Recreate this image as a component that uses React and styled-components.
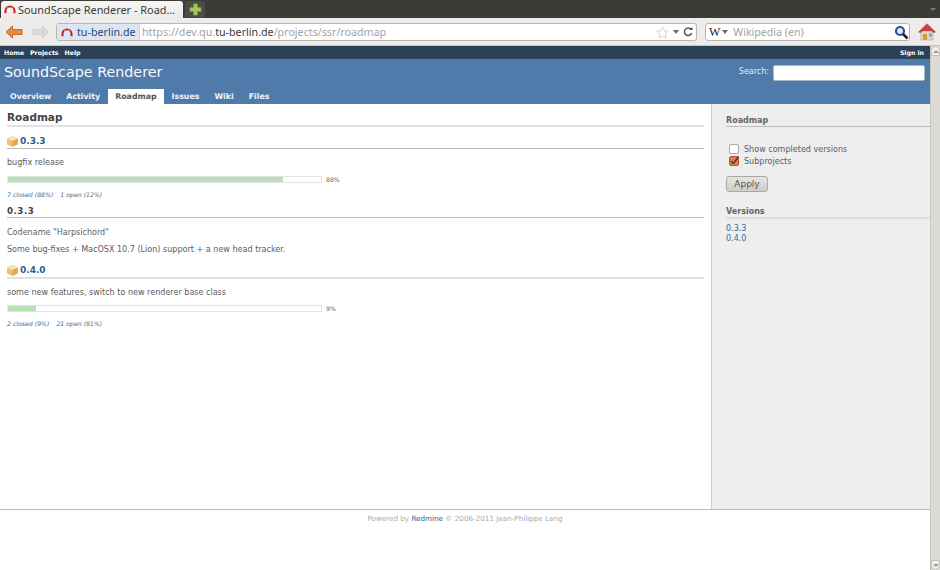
import React from 'react';
import styled, { createGlobalStyle } from 'styled-components';

const GlobalStyle = createGlobalStyle`
  html, body {
    margin: 0;
    padding: 0;
    overflow: hidden;
    background: #fff;
  }
`

const Browser = styled.div`
  width: 940px;
  height: 570px;
  display: flex;
  flex-direction: column;
  overflow: hidden;
  font-family: "DejaVu Sans", sans-serif;
`

const TabStrip = styled.div`
  height: 18px;
  flex: none;
  background: #3c3b37;
  display: flex;
  align-items: flex-end;
  padding-left: 1px;
  gap: 2px;
  position: relative;
`

const ActiveTab = styled.div`
  width: 182px;
  height: 17px;
  box-sizing: border-box;
  background: linear-gradient(#f6f5f4, #edecea);
  border-radius: 3px 3px 0 0;
  display: flex;
  align-items: center;
  padding-left: 3px;
  gap: 2px;
  font: 10.9px "Noto Sans", sans-serif;
  color: #3c3b37;
  white-space: nowrap;
`

const NewTab = styled.div`
  width: 20px;
  height: 17px;
  background: #4c4b46;
  border-radius: 3px 3px 0 0;
  display: flex;
  align-items: center;
  justify-content: center;
`

const TabMenu = styled.div`
  position: absolute;
  right: 4px;
  top: 8px;
  border-left: 3px solid transparent;
  border-right: 3px solid transparent;
  border-top: 3px solid #77766f;
`

const Toolbar = styled.div`
  height: 28px;
  flex: none;
  box-sizing: border-box;
  background: #edecea;
  border-bottom: 1px solid #c9c7c2;
  display: flex;
  align-items: center;
  padding: 1px 4px 0 5px;
`

const NavSlot = styled.div`
  display: flex;
  width: ${p => p.$width}px;
  flex: none;
`

const UrlBar = styled.div`
  width: 641px;
  height: 18px;
  box-sizing: border-box;
  border: 1px solid #b9b7b2;
  border-radius: 3px;
  background: #fff;
  display: flex;
  align-items: center;
  font: 10.7px "Noto Sans", sans-serif;
  color: #a3a3a3;
  overflow: hidden;
  flex: none;
  margin-right: 8px;
`

const SiteBadge = styled.div`
  height: 100%;
  width: 83px;
  flex: none;
  box-sizing: border-box;
  background: #dce6f2;
  border-right: 1px solid #ccd5e0;
  display: flex;
  align-items: center;
  padding-left: 4px;
  gap: 4px;
  color: #27476e;
  white-space: nowrap;
`

const UrlText = styled.div`
  flex: 1;
  padding-left: 2px;
  white-space: nowrap;

  b {
    font-weight: normal;
    color: #3c3b37;
  }
`

const UrlIcons = styled.div`
  display: flex;
  align-items: center;
  gap: 4px;
  padding-right: 3px;
`

const DropArrow = styled.span`
  display: inline-block;
  border-left: 3px solid transparent;
  border-right: 3px solid transparent;
  border-top: 4px solid #6a6a66;
`

const SearchBar = styled.div`
  width: 205px;
  height: 18px;
  box-sizing: border-box;
  border: 1px solid #b9b7b2;
  border-radius: 3px;
  background: #fff;
  display: flex;
  align-items: center;
  padding: 0 0 0 3px;
  font: 10.6px "Noto Sans", sans-serif;
  color: #a3a3a3;
  flex: none;
  margin-right: 8px;
`

const WikiW = styled.span`
  font: 12px "Liberation Serif", serif;
  color: #222;
  margin-right: 2px;
`

const SearchHint = styled.span`
  flex: 1;
  margin-left: 5px;
`

const Viewport = styled.div`
  flex: 1;
  display: flex;
  min-height: 0;
`

const Page = styled.div`
  flex: 1;
  display: flex;
  flex-direction: column;
  min-width: 0;
  font-size: 8.05px;
  color: #5c5c5c;
`

const TopMenu = styled.div`
  height: 13px;
  flex: none;
  background: #2c4056;
  display: flex;
  align-items: center;
  justify-content: space-between;
  padding: 0 6px 0 4px;
  color: #fff;
  font-size: 6.2px;
  font-weight: bold;
`

const TopLinks = styled.div`
  display: flex;
  gap: 6px;
`

const Header = styled.div`
  height: 45px;
  flex: none;
  background: #507aaa;
  color: #f8f8f8;
  display: flex;
  flex-direction: column;
  justify-content: space-between;
`

const HeaderTop = styled.div`
  display: flex;
  justify-content: space-between;
  padding: 5px 5px 0 4px;
`

const Title = styled.div`
  font-size: 14.3px;
  line-height: 17px;
`

const QuickSearch = styled.div`
  display: flex;
  align-items: center;
  gap: 4px;
  font-size: 8px;
  color: #e6ecf3;
`

const SearchLabel = styled.span`
  margin-bottom: 2px;
`

const SearchInput = styled.div`
  width: 150px;
  height: 14px;
  background: #fff;
  border: 1px solid #a9b6c4;
  border-radius: 2px;
`

const Tabs = styled.div`
  display: flex;
  height: 15px;
  padding-left: 3px;
  gap: 1px;
`

const Tab = styled.div`
  padding: 0 7px;
  line-height: 16px;
  font-size: 7.85px;
  font-weight: bold;
  color: ${p => (p.$active ? '#555' : '#f0f4f8')};
  background: ${p => (p.$active ? '#fff' : 'transparent')};
`

const Main = styled.div`
  flex: 1;
  display: flex;
  min-height: 0;
`

const Content = styled.div`
  flex: 1;
  padding: 6px 7px 0;
  min-width: 0;
`

const PageTitle = styled.h2`
  margin: 0;
  font-size: 10.5px;
  line-height: 15px;
  font-weight: bold;
  color: #444;
  border-bottom: 2px solid #e2e2e2;
`

const VersionHead = styled.h3`
  margin: ${p => p.$top || 7}px 0 0;
  font-size: 9px;
  height: 14px;
  font-weight: bold;
  color: #2f6090;
  display: flex;
  align-items: center;
  gap: 2px;
  border-bottom: ${p => (p.$thick ? '2px solid #e0e0e0' : '1px solid #bbb')};
`

const SubHead = styled.h3`
  margin: 7px 0 0;
  font-size: 8.7px;
  line-height: 11px;
  font-weight: bold;
  color: #444;
  letter-spacing: 0.5px;
  border-bottom: 1px solid #bbb;
`

const Text = styled.p`
  margin: ${p => p.$top}px 0 0;
  line-height: 11px;
`

const ProgressRow = styled.div`
  display: flex;
  align-items: center;
  margin-top: ${p => p.$top}px;
  height: 7px;
  gap: 4px;
  font-size: 6.2px;
`

const Track = styled.div`
  width: 315px;
  height: 7px;
  box-sizing: border-box;
  background: #fff;
  border: 1px solid #e4e4e4;
`

const Fill = styled.div`
  height: 100%;
  background: #bae0ba;
`

const Stats = styled.div`
  margin-top: 7px;
  display: flex;
  gap: 7px;
  font-size: 6.2px;
  line-height: 9px;
  font-style: italic;
  color: #666;

  a {
    color: #3a6a9a;
  }
`

const Sidebar = styled.div`
  width: 219px;
  flex: none;
  box-sizing: border-box;
  background: #eee;
  border-left: 1px solid #d0d0d0;
  padding: 11px 0 0 14px;
`

const SideHead = styled.div`
  font-size: 8px;
  line-height: 11px;
  font-weight: bold;
  color: #666;
  border-bottom: ${p => (p.$thick ? '2px solid #ddd' : '1px solid #bbb')};
  margin-top: ${p => p.$top || 0}px;
`

const CheckRow = styled.div`
  display: flex;
  align-items: center;
  gap: 5px;
  height: 12px;
  padding-left: 3px;
  margin-top: ${p => p.$top || 0}px;
`

const Box = styled.span`
  width: 8px;
  height: 8px;
  flex: none;
  border: 1px solid ${p => (p.$checked ? '#b5532f' : '#a9a9a4')};
  border-radius: 2px;
  background: ${p => (p.$checked ? '#e4794f' : '#fff')};
  display: flex;
  align-items: center;
  justify-content: center;
`

const ApplyButton = styled.button`
  display: block;
  margin: 9px 0 0;
  padding: 0;
  width: 42px;
  height: 16px;
  border: 1px solid #a9a8a3;
  border-radius: 3px;
  background: linear-gradient(#e6e5e3, #cfcdc9);
  font: 9px "DejaVu Sans", sans-serif;
  color: #555;
`

const VersionLink = styled.div`
  color: #3a6a9a;
  line-height: 10px;
  margin-top: ${p => p.$top || 0}px;
`

const Footer = styled.div`
  height: 61px;
  flex: none;
  box-sizing: border-box;
  border-top: 1px solid #bbb;
  background: #fff;
  padding-top: 4px;
  text-align: center;
  font-size: 7.2px;
  line-height: 10px;
  color: #aaa;

  a {
    color: #2f6090;
  }
`

const Scrollbar = styled.div`
  width: 10px;
  flex: none;
  box-sizing: border-box;
  background: #dcdad5;
  border-left: 1px solid #c8c6c1;
  display: flex;
  flex-direction: column;
  justify-content: space-between;
  align-items: center;
`

const ScrollEnd = styled.div`
  width: 9px;
  height: 10px;
  box-sizing: border-box;
  background: #f2f1f0;
  border: 1px solid #c2c0bb;
  border-radius: ${p => (p.$up ? '5px 5px 0 0' : '0 0 5px 5px')};
  display: flex;
  align-items: center;
  justify-content: center;

  &::after {
    content: '';
    border-left: 3px solid transparent;
    border-right: 3px solid transparent;
    ${p => (p.$up ? 'border-bottom' : 'border-top')}: 3px solid #9a9994;
  }
`

const ArcLogo = ({ size = 12 }) => (
  <svg width={size} height={size * 0.75} viewBox="0 0 16 12" fill="none" style={{ flex: 'none' }}>
    <path d="M2 11 L2 8 A6 6 0 0 1 14 8 L14 11" stroke="#c8242b" strokeWidth="2.8" />
    <path d="M4.5 2.5 L6.5 5 M11.5 2.5 L9.5 5" stroke="#fff" strokeWidth="0.9" opacity="0.8" />
  </svg>
)

const BackArrow = () => (
  <svg width="18" height="14" viewBox="0 0 18 14">
    <path d="M7.5 1 L1 7 L7.5 13 L7.5 9.5 L17 9.5 L17 4.5 L7.5 4.5 Z" fill="#e88a3c" stroke="#c8662a" strokeWidth="1" />
  </svg>
)

const ForwardArrow = () => (
  <svg width="18" height="14" viewBox="0 0 18 14">
    <path d="M10.5 1 L17 7 L10.5 13 L10.5 9.5 L1 9.5 L1 4.5 L10.5 4.5 Z" fill="#dcdbd8" stroke="#cfcec9" strokeWidth="1" />
  </svg>
)

const Plus = () => (
  <svg width="13" height="13" viewBox="0 0 13 13">
    <path d="M4.5 1 H8.5 V4.5 H12 V8.5 H8.5 V12 H4.5 V8.5 H1 V4.5 H4.5 Z" fill="#a3c75a" stroke="#7d9c3e" strokeWidth="0.8" />
  </svg>
)

const Star = () => (
  <svg width="13" height="13" viewBox="0 0 13 13">
    <path d="M6.5 1 L8.2 4.7 L12.2 5.2 L9.2 7.9 L10 12 L6.5 10 L3 12 L3.8 7.9 L0.8 5.2 L4.8 4.7 Z" fill="#fff" stroke="#d0d0cc" strokeWidth="1" />
  </svg>
)

const Reload = () => (
  <svg width="10" height="10" viewBox="0 0 10 10" fill="none">
    <path d="M8 2.5 A3.7 3.7 0 1 0 8.6 6" stroke="#55554f" strokeWidth="1.5" />
    <path d="M6 3 H9.5 V0 Z" fill="#55554f" />
  </svg>
)

const Magnifier = () => (
  <svg width="15" height="15" viewBox="0 0 15 15" fill="none">
    <circle cx="6" cy="6" r="4" fill="#dfe8f5" stroke="#2c4f9c" strokeWidth="2.2" />
    <path d="M9 9 L13.5 13.5" stroke="#222" strokeWidth="2.6" />
  </svg>
)

const Home = () => (
  <svg width="18" height="18" viewBox="0 0 18 18">
    <path d="M3 8 H15 V17 H3 Z" fill="#d9d7d0" stroke="#a5a39c" strokeWidth="0.6" />
    <path d="M5 11 H9 V17 H5 Z" fill="#d89a2c" />
    <path d="M11 10.5 H14 V13.5 H11 Z" fill="#8f9aa5" />
    <path d="M3 8 L9 2.6 L15 8 Z" fill="#c9463c" />
    <path d="M0.5 9 L9 0.8 L17.5 9 L15.5 9.6 L9 3.6 L2.5 9.6 Z" fill="#c9463c" stroke="#a5312a" strokeWidth="0.5" />
  </svg>
)

const PackageIcon = () => (
  <svg width="11" height="11" viewBox="0 0 11 11" style={{ flex: 'none' }}>
    <path d="M5.5 0.5 L10.5 2.8 V8.2 L5.5 10.5 L0.5 8.2 V2.8 Z" fill="#eec26a" stroke="#d7a24a" strokeWidth="0.5" />
    <path d="M0.5 2.8 L5.5 5 L10.5 2.8 L5.5 0.5 Z" fill="#f8e6b8" />
    <path d="M5.5 5 V10.5 L10.5 8.2 V2.8 Z" fill="#dda94e" />
  </svg>
)

const Check = () => (
  <svg width="10" height="10" viewBox="0 0 10 10" fill="none" style={{ flex: 'none', overflow: 'visible' }}>
    <path d="M2 5 L4.5 7.5 L9.5 0.5" stroke="#4a3a30" strokeWidth="1.3" />
  </svg>
)

const Progress = ({ percent, fill, top }) => (
  <ProgressRow $top={top}>
    <Track><Fill style={{ width: fill }} /></Track>
    {percent}
  </ProgressRow>
)

const tabs = ['Overview', 'Activity', 'Roadmap', 'Issues', 'Wiki', 'Files'];

const App = () => {
  return (
    <Browser>
      <GlobalStyle />
      <TabStrip>
        <ActiveTab><ArcLogo />SoundScape Renderer - Road…</ActiveTab>
        <NewTab><Plus /></NewTab>
        <TabMenu />
      </TabStrip>
      <Toolbar>
        <NavSlot $width={27}><BackArrow /></NavSlot>
        <NavSlot $width={24}><ForwardArrow /></NavSlot>
        <UrlBar>
          <SiteBadge><ArcLogo />tu-berlin.de</SiteBadge>
          <UrlText>https://dev.qu.<b>tu-berlin.de</b>/projects/ssr/roadmap</UrlText>
          <UrlIcons><Star /><DropArrow /><Reload /></UrlIcons>
        </UrlBar>
        <SearchBar>
          <WikiW>W</WikiW>
          <DropArrow />
          <SearchHint>Wikipedia (en)</SearchHint>
          <Magnifier />
        </SearchBar>
        <Home />
      </Toolbar>
      <Viewport>
        <Page>
          <TopMenu>
            <TopLinks><span>Home</span><span>Projects</span><span>Help</span></TopLinks>
            <span>Sign in</span>
          </TopMenu>
          <Header>
            <HeaderTop>
              <Title>SoundScape Renderer</Title>
              <QuickSearch><SearchLabel>Search:</SearchLabel><SearchInput /></QuickSearch>
            </HeaderTop>
            <Tabs>
              {tabs.map(tab => <Tab key={tab} $active={tab === 'Roadmap'}>{tab}</Tab>)}
            </Tabs>
          </Header>
          <Main>
            <Content>
              <PageTitle>Roadmap</PageTitle>
              <VersionHead><PackageIcon />0.3.3</VersionHead>
              <Text $top={8}>bugfix release</Text>
              <Progress percent="88%" fill="88%" top={8} />
              <Stats><span><a>7 closed</a> (88%)</span><span><a>1 open</a> (12%)</span></Stats>
              <SubHead>0.3.3</SubHead>
              <Text $top={9}>Codename "Harpsichord"</Text>
              <Text $top={6}>Some bug-fixes + MacOSX 10.7 (Lion) support + a new head tracker.</Text>
              <VersionHead $thick $top={8}><PackageIcon />0.4.0</VersionHead>
              <Text $top={8}>some new features, switch to new renderer base class</Text>
              <Progress percent="9%" fill="9%" top={7} />
              <Stats><span><a>2 closed</a> (9%)</span><span><a>21 open</a> (91%)</span></Stats>
            </Content>
            <Sidebar>
              <SideHead>Roadmap</SideHead>
              <CheckRow $top={16}><Box />Show completed versions</CheckRow>
              <CheckRow><Box $checked><Check /></Box>Subprojects</CheckRow>
              <ApplyButton>Apply</ApplyButton>
              <SideHead $thick $top={14}>Versions</SideHead>
              <VersionLink $top={5}>0.3.3</VersionLink>
              <VersionLink>0.4.0</VersionLink>
            </Sidebar>
          </Main>
          <Footer>Powered by <a>Redmine</a> © 2006-2011 Jean-Philippe Lang</Footer>
        </Page>
        <Scrollbar>
          <ScrollEnd $up />
          <ScrollEnd />
        </Scrollbar>
      </Viewport>
    </Browser>
  );
}

export default App;
